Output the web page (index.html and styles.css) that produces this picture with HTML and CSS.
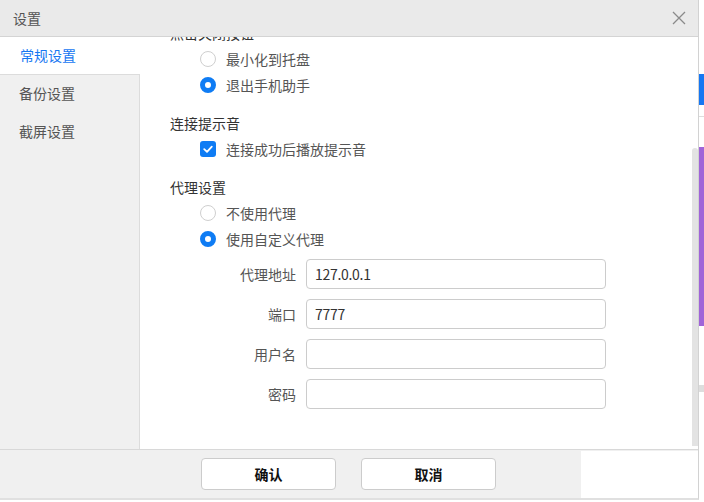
FILE: index.html
```html
<!DOCTYPE html>
<html lang="zh">
<head>
<meta charset="utf-8">
<link rel="stylesheet" href="styles.css">
</head>
<body>
<div class="dialog">
  <div class="titlebar">
    <span class="title">设置</span>
    <svg class="close" width="14" height="14" viewBox="0 0 14 14"><path d="M1 1L13 13M13 1L1 13" stroke="#8a8a8a" stroke-width="1.3" fill="none"/></svg>
  </div>
  <div class="main">
    <div class="sidebar">
      <div class="nav-item active">常规设置</div>
      <div class="nav-item">备份设置</div>
      <div class="nav-item">截屏设置</div>
    </div>
    <div class="content">
      <div class="scroll">
        <div class="group">
          <div class="heading">点击关闭按钮</div>
          <div class="option"><span class="radio"></span><span class="label">最小化到托盘</span></div>
          <div class="option"><span class="radio checked"></span><span class="label">退出手机助手</span></div>
        </div>
        <div class="group">
          <div class="heading">连接提示音</div>
          <div class="option"><span class="checkbox"><svg width="16" height="16" viewBox="0 0 16 16"><path d="M4.2 8.2L7 10.8L11.8 5.6" stroke="#fff" stroke-width="1.8" fill="none" stroke-linecap="round" stroke-linejoin="round"/></svg></span><span class="label">连接成功后播放提示音</span></div>
        </div>
        <div class="group last">
          <div class="heading">代理设置</div>
          <div class="option"><span class="radio"></span><span class="label">不使用代理</span></div>
          <div class="option"><span class="radio checked"></span><span class="label">使用自定义代理</span></div>
          <div class="form">
            <div class="form-row"><span class="form-label">代理地址</span><div class="input">127.0.0.1</div></div>
            <div class="form-row"><span class="form-label">端口</span><div class="input">7777</div></div>
            <div class="form-row"><span class="form-label">用户名</span><div class="input"></div></div>
            <div class="form-row"><span class="form-label">密码</span><div class="input"></div></div>
          </div>
        </div>
      </div>
      <div class="scrollbar"><div class="thumb"></div></div>
    </div>
  </div>
  <div class="footer">
    <button class="btn">确认</button>
    <button class="btn">取消</button>
    <div class="footer-patch"></div>
  </div>
</div>
<div class="strip">
  <div class="strip-blue"></div>
  <div class="strip-line"></div>
  <div class="strip-purple"></div>
  <div class="strip-line2"></div>
</div>
</body>
</html>
```

FILE: styles.css
```css
html, body {
  margin: 0;
  padding: 0;
  background: #ffffff;
}
body {
  width: 704px;
  height: 502px;
  overflow: hidden;
  display: flex;
  align-items: flex-start;
  font-family: "Noto Sans CJK SC", "Microsoft YaHei", sans-serif;
  font-size: 14px;
}
.dialog {
  width: 698px;
  border-right: 1px solid #d2d2d2;
  border-bottom: 2px solid #e0e0e0;
  display: flex;
  flex-direction: column;
  background: #fff;
}
.titlebar {
  height: 36px;
  border-bottom: 1px solid #d4d4d4;
  background: #eaeaea;
  display: flex;
  align-items: center;
  justify-content: space-between;
  padding: 0 12px 0 13px;
}
.title {
  color: #555;
  font-size: 14px;
  line-height: 20px;
}
.close {
  display: block;
}
.main {
  height: 412px;
  display: flex;
}
.sidebar {
  width: 139px;
  background: #f0f0f0;
  border-right: 1px solid #dcdcdc;
  flex-shrink: 0;
}
.nav-item {
  height: 38px;
  line-height: 37px;
  padding-left: 19px;
  color: #555;
  font-size: 14px;
}
.nav-item.active {
  height: 37px;
  line-height: 37px;
  background: #fff;
  color: #1677f2;
  padding-left: 20px;
  border-bottom: 1px solid #dcdcdc;
  margin-right: -1px;
  position: relative;
}
.content {
  flex: 1;
  display: flex;
  overflow: hidden;
  background: #fff;
}
.scroll {
  flex: 1;
  margin-top: -17px;
  padding-left: 30px;
}
.group {
  margin-bottom: 12px;
}
.heading {
  height: 26px;
  line-height: 26px;
  color: #333;
}
.option {
  height: 26px;
  display: flex;
  align-items: center;
  margin-left: 30px;
}
.label {
  margin-left: 10px;
  color: #555;
  line-height: 26px;
}
.radio {
  width: 16px;
  height: 16px;
  box-sizing: border-box;
  border: 1px solid #cfcfcf;
  border-radius: 50%;
  background: #fff;
}
.radio.checked {
  border: 5px solid #0f7cf4;
}
.checkbox {
  width: 16px;
  height: 16px;
  border-radius: 3px;
  background: #0f7cf4;
  display: block;
}
.checkbox svg {
  display: block;
}
.form {
  padding-top: 7px;
  display: flex;
  flex-direction: column;
  gap: 10px;
}
.form-row {
  display: flex;
  align-items: center;
  margin-left: 56px;
}
.form-label {
  width: 70px;
  text-align: right;
  color: #555;
  margin-right: 10px;
}
.input {
  width: 300px;
  height: 30px;
  box-sizing: border-box;
  border: 1px solid #cccccc;
  border-radius: 4px;
  padding-left: 8px;
  line-height: 28px;
  color: #333;
  font-size: 14px;
  letter-spacing: -0.3px;
}
.scrollbar {
  width: 6px;
  padding-top: 111px;
  flex-shrink: 0;
}
.thumb {
  height: 298px;
  background: #e3e3e3;
  border-radius: 3px 3px 0 0;
}
.footer {
  position: relative;
  height: 48px;
  border-top: 1px solid #d8d8d8;
  background: #f0f0f0;
  display: flex;
  align-items: center;
  justify-content: center;
  gap: 25px;
  padding-right: 1px;
}
.btn {
  width: 135px;
  height: 32px;
  box-sizing: border-box;
  border: 1px solid #cccccc;
  border-radius: 4px;
  background: #fff;
  font-family: "Noto Sans CJK SC", "Microsoft YaHei", sans-serif;
  font-size: 14px;
  font-weight: bold;
  color: #111;
  padding: 0;
  margin: 0;
}
.footer-patch {
  position: absolute;
  right: 0;
  top: 1px;
  bottom: 0;
  width: 117px;
  background: #fff;
}
.strip {
  width: 5px;
  height: 502px;
  background: #fff;
}
.strip-blue {
  margin-top: 74px;
  height: 31px;
  background: #1677f2;
}
.strip-line {
  margin-top: 11px;
  height: 1px;
  background: #dddddd;
}
.strip-purple {
  margin-top: 30px;
  height: 179px;
  background: #a064d8;
}
.strip-line2 {
  margin-top: 59px;
  height: 7px;
  background: #dddddd;
}
```
